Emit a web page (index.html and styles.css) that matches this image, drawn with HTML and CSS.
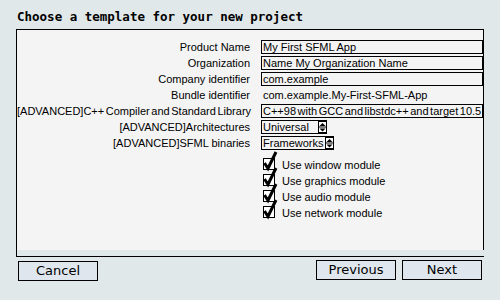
FILE: index.html
```html
<!DOCTYPE html>
<html lang="en">
<head>
    <meta charset="UTF-8">
    <title>New SFML Project</title>
    <link rel="stylesheet" href="styles.css">
</head>
<body>
    <h1 class="title">Choose a template for your new project</h1>

    <div class="frame">
        <div class="panel">
            <div class="form">
                <div class="label">Product Name</div>
                <div class="box">My First SFML App</div>

                <div class="label">Organization</div>
                <div class="box">Name My Organization Name</div>

                <div class="label">Company identifier</div>
                <div class="box">com.example</div>

                <div class="label">Bundle identifier</div>
                <div class="plain">com.example.My-First-SFML-App</div>

                <div class="label tight">[ADVANCED]C++ Compiler and Standard Library</div>
                <div class="box tight">C++98 with GCC and libstdc++ and target 10.5</div>

                <div class="label">[ADVANCED]Architectures</div>
                <div><div class="select select-arch"><span>Universal</span><svg class="stepper" width="9" height="12" viewBox="0 0 9 12"><rect x="0.5" y="0.5" width="8" height="11" fill="#fff" stroke="#000"/><polygon points="1.5,5 4.5,2 7.5,5" fill="#000"/><line x1="0" y1="6" x2="9" y2="6" stroke="#000"/><polygon points="1.5,7.5 4.5,10.5 7.5,7.5" fill="#000"/></svg></div></div>

                <div class="label">[ADVANCED]SFML binaries</div>
                <div><div class="select select-bin"><span>Frameworks</span><svg class="stepper" width="9" height="12" viewBox="0 0 9 12"><rect x="0.5" y="0.5" width="8" height="11" fill="#fff" stroke="#000"/><polygon points="1.5,5 4.5,2 7.5,5" fill="#000"/><line x1="0" y1="6" x2="9" y2="6" stroke="#000"/><polygon points="1.5,7.5 4.5,10.5 7.5,7.5" fill="#000"/></svg></div></div>
            </div>

            <div class="checks">
                <div class="check"><svg class="tick" width="21" height="16" viewBox="0 0 21 16"><rect x="2.5" y="1.5" width="11" height="11" fill="#fff" stroke="#000"/><polyline points="3.5,6 7,11.5 15,-5" fill="none" stroke="#000" stroke-width="3"/></svg><span>Use window module</span></div>
                <div class="check"><svg class="tick" width="21" height="16" viewBox="0 0 21 16"><rect x="2.5" y="1.5" width="11" height="11" fill="#fff" stroke="#000"/><polyline points="3.5,6 7,11.5 15,-5" fill="none" stroke="#000" stroke-width="3"/></svg><span>Use graphics module</span></div>
                <div class="check"><svg class="tick" width="21" height="16" viewBox="0 0 21 16"><rect x="2.5" y="1.5" width="11" height="11" fill="#fff" stroke="#000"/><polyline points="3.5,6 7,11.5 15,-5" fill="none" stroke="#000" stroke-width="3"/></svg><span>Use audio module</span></div>
                <div class="check"><svg class="tick" width="21" height="16" viewBox="0 0 21 16"><rect x="2.5" y="1.5" width="11" height="11" fill="#fff" stroke="#000"/><polyline points="3.5,6 7,11.5 15,-5" fill="none" stroke="#000" stroke-width="3"/></svg><span>Use network module</span></div>
            </div>
        </div>
    </div>

    <div class="actions">
        <button class="btn btn-cancel">Cancel</button>
        <button class="btn btn-prev">Previous</button>
        <button class="btn">Next</button>
    </div>
</body>
</html>
```

FILE: styles.css
```css
body {
    margin: 0;
    background-color: #e1e8ea;
    font-family: "Liberation Sans", Arial, sans-serif;
    font-size: 11px;
    color: #000;
}
.title {
    margin: 0;
    height: 20px;
    padding: 9px 0 0 17px;
    font: bold 12.5px/15px "DejaVu Sans Mono", monospace;
}
.frame {
    width: 467px;
    margin-left: 16px;
    border: 1px solid #000;
    border-right: none;
    padding-bottom: 6px;
}
.panel {
    height: 220px;
    box-sizing: border-box;
    padding-top: 10px;
    background-color: #f4f4f4;
    border-right: 1px solid #000;
}
.form {
    display: grid;
    grid-template-columns: 233px 222px;
    grid-auto-rows: 16px;
    column-gap: 11px;
}
.label {
    text-align: right;
    line-height: 14px;
    white-space: nowrap;
}
.tight {
    word-spacing: -1.5px;
}
.box {
    height: 14px;
    box-sizing: border-box;
    border: 1px solid #000;
    padding: 0 1px;
    line-height: 12px;
    white-space: nowrap;
    overflow: hidden;
}
.plain {
    line-height: 14px;
    padding-left: 2px;
}
.select {
    display: flex;
    justify-content: space-between;
    align-items: center;
    height: 14px;
    box-sizing: border-box;
    border: 1px solid #000;
    border-right: none;
    padding-left: 1px;
    line-height: 12px;
}
.select-arch {
    width: 66px;
}
.select-bin {
    width: 73px;
}
.stepper {
    display: block;
}
.checks {
    margin-top: 5px;
    padding-left: 244px;
}
.check {
    display: flex;
    align-items: center;
    height: 16px;
    line-height: 14px;
}
.tick {
    display: block;
    overflow: visible;
    flex: none;
}
.actions {
    display: flex;
    align-items: flex-start;
    gap: 6px;
    padding: 3px 18px 0 18px;
}
.btn {
    width: 80px;
    height: 20px;
    padding: 0;
    border: 1px solid #000;
    border-radius: 0;
    background-color: #dfe6ee;
    font: 13px/18px "DejaVu Sans", Verdana, sans-serif;
    color: #000;
}
.btn-cancel {
    margin-top: 1px;
}
.btn-prev {
    margin-left: auto;
}
```
